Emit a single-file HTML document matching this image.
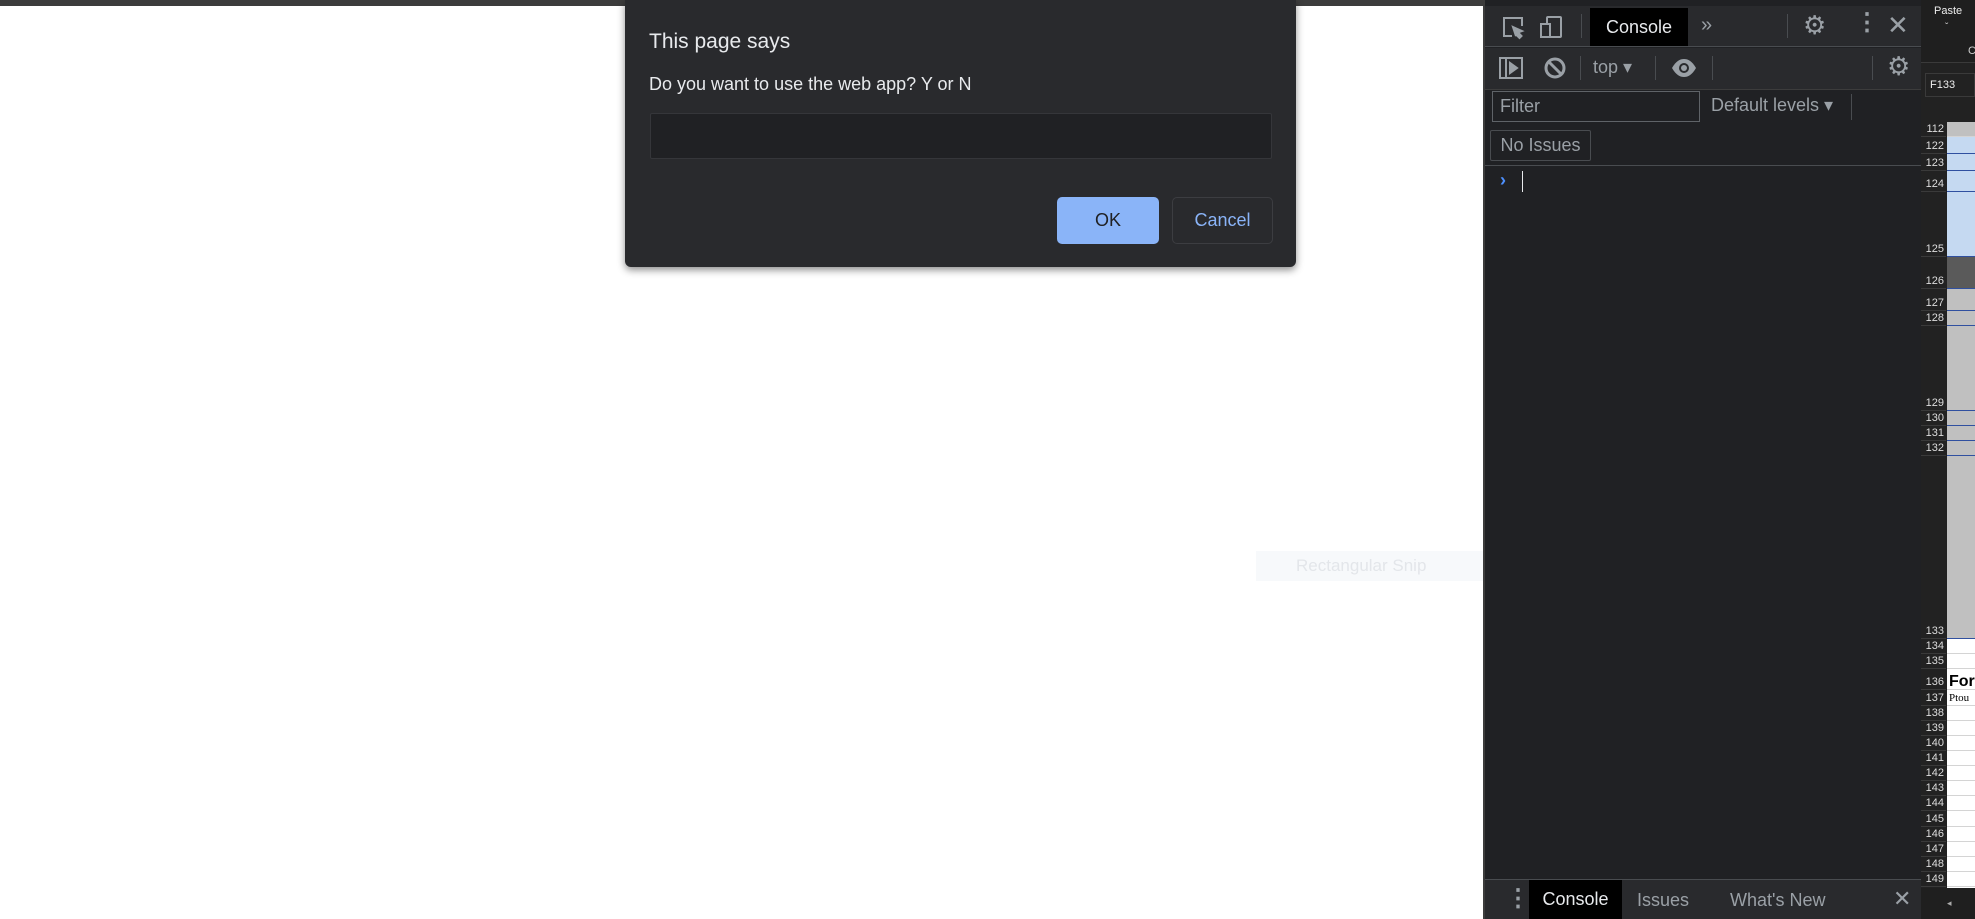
<!DOCTYPE html>
<html><head><meta charset="utf-8"><style>
*{margin:0;padding:0;box-sizing:border-box}
body{width:1975px;height:919px;overflow:hidden;background:#fff;font-family:"Liberation Sans",sans-serif;position:relative}
.a{position:absolute}
.t{color:#e8eaed;font-size:18px;white-space:nowrap}
.g{color:#9aa0a6}
.rn{position:absolute;left:1921px;width:25px;background:#222;color:#ddd;font-size:11px;text-align:right;padding-right:2px;border-bottom:1px solid #3a3a3a;display:flex;align-items:flex-end;justify-content:flex-end;line-height:13px}
.rc{position:absolute;left:1947px;width:28px;border-bottom:1px solid #d4d4d4}
</style></head><body>
<div class="a" style="left:0;top:0;width:1483px;height:6px;background:#3c3c3c"></div>

<!-- snip hint -->
<div class="a" style="left:1256px;top:551px;width:235px;height:30px;background:#f7f9fb;color:#e3e6ea;font-size:17px;padding:5px 0 0 40px">Rectangular Snip</div>

<!-- dialog -->
<div class="a" style="left:625px;top:0;width:671px;height:267px;background:#292a2d;border-radius:0 0 6px 6px;box-shadow:0 3px 8px rgba(0,0,0,.45)">
 <div class="a t" style="left:24px;top:30px;font-size:21px">This page says</div>
 <div class="a t" style="left:24px;top:74px;font-size:18px">Do you want to use the web app? Y or N</div>
 <div class="a" style="left:25px;top:113px;width:622px;height:46px;background:#202124;border:1px solid #35363a;border-radius:2px"></div>
 <div class="a" style="left:432px;top:197px;width:102px;height:47px;background:#8ab4f8;border-radius:5px;color:#202124;font-size:18px;text-align:center;line-height:47px">OK</div>
 <div class="a" style="left:547px;top:197px;width:101px;height:47px;border:1px solid #3c3d41;border-radius:5px;color:#8ab4f8;font-size:18px;text-align:center;line-height:45px">Cancel</div>
</div>

<!-- devtools -->
<div class="a" style="left:1483px;top:0;width:438px;height:919px;background:#202124;border-left:2px solid #3c3c3c">
 <div class="a" style="left:0;top:6px;width:438px;height:41px;background:#292a2d;border-bottom:1px solid #494c50"></div>
 <svg class="a" style="left:15px;top:14px" width="26" height="26" viewBox="0 0 26 26" fill="none" stroke="#9aa0a6" stroke-width="2"><path d="M12 22H4V4h18v8"/><path d="M13 13l9 4-4 1.5 3.5 3.5-2 2-3.5-3.5L16 22z" fill="#9aa0a6"/></svg>
 <svg class="a" style="left:53px;top:14px" width="26" height="26" viewBox="0 0 26 26" fill="none" stroke="#9aa0a6" stroke-width="2"><rect x="9" y="3" width="14" height="20" rx="1"/><rect x="3" y="10" width="9" height="13" fill="#292a2d"/></svg>
 <div class="a" style="left:96px;top:14px;width:1px;height:24px;background:#494c50"></div>
 <div class="a t" style="left:105px;top:8px;width:98px;height:38px;background:#000;text-align:center;line-height:38px">Console</div>
 <div class="a g" style="left:216px;top:14px;font-size:20px">»</div>
 <div class="a" style="left:302px;top:14px;width:1px;height:24px;background:#494c50"></div>
 <div class="a g" style="left:318px;top:10px;font-size:26px">⚙</div>
 <div class="a g" style="left:370px;top:8px;font-size:24px;font-weight:bold">⋮</div>
 <div class="a g" style="left:402px;top:10px;font-size:26px">✕</div>
 <!-- toolbar 2 -->
 <div class="a" style="left:0;top:48px;width:438px;height:42px;background:#292a2d;border-bottom:1px solid #3c3c3c"></div>
 <svg class="a" style="left:13px;top:56px" width="26" height="24" viewBox="0 0 26 24" fill="none" stroke="#9aa0a6" stroke-width="2"><rect x="2" y="2" width="22" height="20"/><path d="M8 2v20"/><path d="M12 7l7 5-7 5z" fill="#9aa0a6"/></svg>
 <svg class="a" style="left:58px;top:56px" width="24" height="24" viewBox="0 0 24 24" fill="none" stroke="#9aa0a6" stroke-width="3"><circle cx="12" cy="12" r="9"/><path d="M6 6l12 12"/></svg>
 <div class="a" style="left:95px;top:56px;width:1px;height:24px;background:#494c50"></div>
 <div class="a g" style="left:108px;top:57px;font-size:18px">top ▾</div>
 <div class="a" style="left:170px;top:56px;width:1px;height:24px;background:#494c50"></div>
 <svg class="a" style="left:186px;top:58px" width="26" height="20" viewBox="0 0 26 20"><path d="M1 10C5 3 9 1 13 1s8 2 12 9c-4 7-8 9-12 9S5 17 1 10z" fill="#9aa0a6"/><circle cx="13" cy="10" r="5" fill="#292a2d"/><circle cx="13" cy="10" r="3" fill="#9aa0a6"/></svg>
 <div class="a" style="left:227px;top:56px;width:1px;height:24px;background:#494c50"></div>
 <div class="a" style="left:387px;top:56px;width:1px;height:24px;background:#494c50"></div>
 <div class="a g" style="left:402px;top:51px;font-size:26px">⚙</div>
 <!-- filter row -->
 <div class="a" style="left:7px;top:91px;width:208px;height:31px;border:1px solid #5f6368;background:#202124;color:#9aa0a6;font-size:18px;padding:4px 7px">Filter</div>
 <div class="a g" style="left:226px;top:95px;font-size:18px">Default levels ▾</div>
 <div class="a" style="left:366px;top:94px;width:1px;height:26px;background:#494c50"></div>
 <div class="a g" style="left:5px;top:130px;width:101px;height:31px;border:1px solid #494c50;border-radius:2px;font-size:18px;text-align:center;line-height:29px">No Issues</div>
 <div class="a" style="left:0;top:165px;width:438px;height:1px;background:#494c50"></div>
 <div class="a" style="left:15px;top:170px;color:#4d90fe;font-size:18px;font-weight:bold">›</div>
 <div class="a" style="left:37px;top:171px;width:1px;height:21px;background:#e8eaed"></div>
 <!-- bottom bar -->
 <div class="a" style="left:0;top:879px;width:438px;height:40px;background:#292a2d;border-top:1px solid #494c50"></div>
 <div class="a g" style="left:21px;top:884px;font-size:24px;font-weight:bold">⋮</div>
 <div class="a t" style="left:44px;top:880px;width:93px;height:39px;background:#000;text-align:center;line-height:39px">Console</div>
 <div class="a g" style="left:152px;top:890px;font-size:18px">Issues</div>
 <div class="a g" style="left:245px;top:890px;font-size:18px">What's New</div>
 <div class="a g" style="left:408px;top:886px;font-size:22px">✕</div>
</div>

<!-- excel strip -->
<div class="a" style="left:1921px;top:0;width:54px;height:919px;background:#222"></div>
<div class="a" style="left:1921px;top:0;width:54px;height:63px;background:#1f1f1f;border-bottom:1px solid #3a3a3a"></div>
<div class="a" style="left:1934px;top:5px;color:#eee;font-size:11px">Paste</div>
<div class="a" style="left:1945px;top:22px;color:#ccc;font-size:10px">ˇ</div>
<div class="a" style="left:1968px;top:45px;color:#ccc;font-size:11px">C</div>
<div class="a" style="left:1925px;top:73px;width:50px;height:24px;border:1px solid #3a3a3a;color:#eee;font-size:11px;padding:5px 4px">F133</div>
<div id="rows"></div>
<div class="a" style="left:1921px;top:888px;width:54px;height:31px;background:#1f1f1f;color:#aaa;font-size:9px;padding:10px 0 0 26px">◂</div>
<script>
var b=[97,109,122,136,152,204,229,247,259,326,338,350,362,507,519,531,548,560,572,584,596,608,620,632,644,656,668,680,692,704,716];
var n=[112,122,123,124,125,126,127,128,129,130,131,132,133,134,135,136,137,138,139,140,141,142,143,144,145,146,147,148,149,150];
var c=function(x){return x=="112"||(x>=127&&x<=133)?"#c0c0c0":(x>=122&&x<=125?"#c5d9f1":(x==126?"#5a5a5a":"#fff"))};
var h='<div class="rn" style="top:112px;height:10px;border:none"></div>';
for(var i=0;i<n.length;i++){var t=Math.round(b[i]*1.26),bb=Math.round(b[i+1]*1.26);
h+='<div class="rn" style="top:'+t+'px;height:'+(bb-t)+'px">'+n[i]+'</div>';
var bc=(n[i]>=122&&n[i]<=133)?'#3050a0':'#d4d4d4';
h+='<div class="rc" style="top:'+t+'px;height:'+(bb-t)+'px;background:'+c(n[i])+';border-bottom-color:'+bc+'"></div>';}
h+='<div class="a" style="left:1949px;top:673px;font-size:16px;font-weight:bold;color:#000">For</div>';
h+='<div class="a" style="left:1949px;top:692px;font-size:11px;font-family:Liberation Serif,serif;color:#000">Ptou</div>';
document.getElementById('rows').innerHTML=h;
</script>
</body></html>
